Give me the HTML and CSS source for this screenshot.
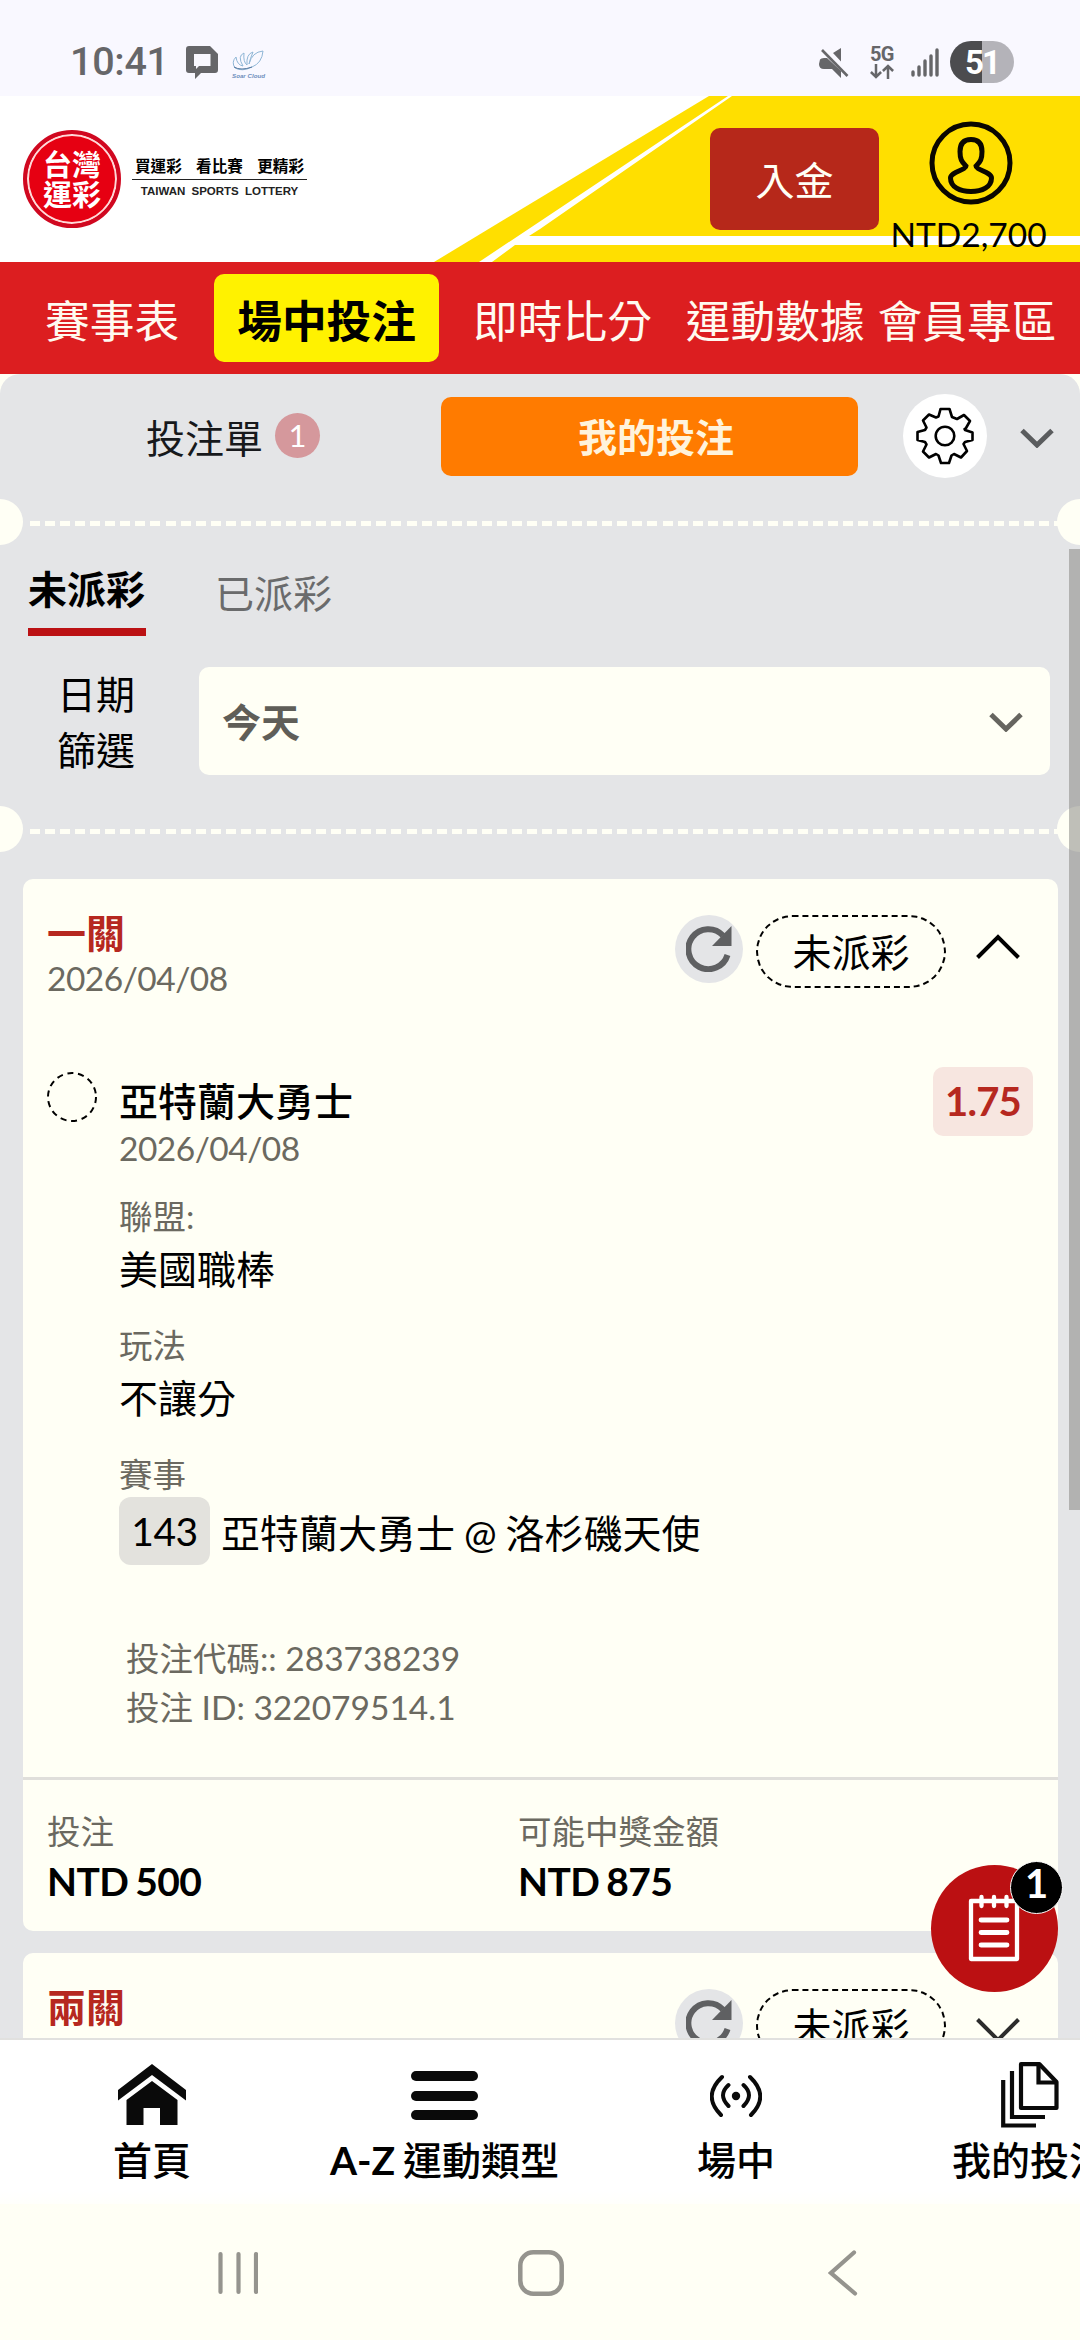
FILE: index.html
```html
<!DOCTYPE html>
<html lang="zh-TW">
<head>
<meta charset="utf-8">
<title>台灣運彩 - 我的投注</title>
<link rel="stylesheet" href="styles.css">
</head>
<body>
<div class="screen">
  <div class="statusbar">
    <div class="status-left">
      <span class="clock">10:41</span>
      <svg class="chat-icon" width="32" height="33" viewBox="0 0 32 33"><path fill="#666669" fill-rule="evenodd" d="M3 0H24L32 8V24Q32 27 29 27H15L9 33V27H3Q0 27 0 24V3Q0 0 3 0ZM8 8V20H10V23L13 20H24.500V8Z"/></svg>
      <span class="cloud-app">
        <svg width="32" height="22" viewBox="0 0 32 22" fill="none" stroke="#8fb6d6" stroke-width="1"><path d="M3 18Q-1 12 4 7Q5 15 11 16Q5 6 12 3Q11 12 15 15Q14 4 21 2Q18 9 17 14Q20 2 31 1Q30 13 20 17Q10 22 3 18Z"/><path stroke="#56789f" d="M2 17Q9 21 20 17"/></svg>
        <span class="cloud-name">Soar Cloud</span>
      </span>
    </div>
    <div class="status-right">
      <svg class="mute-icon" width="31" height="31" viewBox="0 0 31 31" fill="#666669"><path d="M14 5L22 0V13.500ZM1 11.500Q2 10 5 10H8L22 23V30L13 21H5Q0 21 0 16Z"/><path d="M3 2L28.500 28" stroke="#666669" stroke-width="2.600"/></svg>
      <div class="net">
        <span class="net-label">5G</span>
        <svg width="24" height="15" viewBox="0 0 24 15" fill="none" stroke="#666669" stroke-width="2.500"><path d="M6 0V13M0.900 8L6 13L11.100 8M18 15V2M12.900 7L18 2L23.100 7"/></svg>
      </div>
      <svg class="signal" width="28" height="29" viewBox="0 0 28 29" stroke="#666669" stroke-width="3.400" stroke-linecap="round"><path d="M2 24V27M8 19V27M14 13V27M20 8V27M26 2V27"/></svg>
      <div class="battery">51</div>
    </div>
  </div>

  <header class="masthead">
    <svg class="masthead-art" width="1080" height="166" viewBox="0 0 1080 166"><path fill="#ffdf00" d="M709 0H1080V166H434Z"/><path fill="#fff" d="M728 0H732L540 133L529 140H1080V149H515L492 166H479Z"/></svg>
    <div class="brand">
      <div class="seal"><span>台灣</span><span>運彩</span></div>
      <div class="slogan">
        <div class="slogan-zh"><span>買運彩</span><span>看比賽</span><span>更精彩</span></div>
        <div class="slogan-en">TAIWAN SPORTS LOTTERY</div>
      </div>
    </div>
    <div class="deposit">入金</div>
    <div class="account">
      <svg width="84" height="84" viewBox="0 0 84 84" fill="none" stroke="#0a0700" stroke-width="5"><circle cx="42" cy="42" r="39"/><path d="M42 18.500C34 18.500 31 23 31 30.500C31 38 32.500 41 37 45C37 49 21.500 51 21.500 57C21.500 66 31 70.500 42 70.500S62.500 66 62.500 57C62.500 51 47 49 47 45C51.500 41 53 38 53 30.500C53 23 50 18.500 42 18.500Z"/></svg>
      <span class="balance">NTD2,700</span>
    </div>
  </header>

  <nav class="mainnav">
    <span>賽事表</span>
    <span class="active">場中投注</span>
    <span class="live">即時比分</span>
    <span class="data">運動數據</span>
    <span class="member">會員專區</span>
  </nav>

  <main class="panel-wrap">
    <div class="panel">
      <div class="slip-tabs">
        <div class="slip-tab">投注單<span class="count">1</span></div>
        <div class="slip-tab current">我的投注</div>
        <div class="settings"><svg width="58" height="58" viewBox="0 0 58 58" fill="none" stroke="#000" stroke-width="2.600" stroke-linejoin="round"><path d="M24.500 2H33.500L36 10L41 12L48 8L54 14L50 21L48.500 22L49 23L56.500 25.500V33L49 35L47.500 37L51 44L45 50.500L38 47L35.500 48.500L33 56H25L22.500 48.500L20 47L13 50.500L7 44.500L10.500 37.500L9 35L1.500 33V25L9 23L10.500 20.500L7 13.500L13 7.500L20 10.500L22.500 9.500Z"/><circle cx="29" cy="29" r="9.300"/></svg></div>
        <svg class="fold" width="34" height="20" viewBox="0 0 34 20" fill="none" stroke="#5a5c5e" stroke-width="5"><path d="M2 2.500L17 17L32 2.500"/></svg>
      </div>
      <div class="perforation"></div>
      <section class="filters">
        <div class="state-tabs"><span class="state on">未派彩</span><span class="state">已派彩</span></div>
        <div class="date-row">
          <div class="date-label">日期<br>篩選</div>
          <div class="select">今天<svg width="34" height="20" viewBox="0 0 34 20" fill="none" stroke="#66655f" stroke-width="5"><path d="M2 2.500L17 17L32 2.500"/></svg></div>
        </div>
      </section>
      <div class="perforation second"></div>

      <section class="tickets">
        <article class="ticket">
          <div class="ticket-head">
            <div><div class="ticket-title">一關</div><div class="muted date">2026/04/08</div></div>
            <div class="actions">
              <span class="reload"><svg width="46" height="46" viewBox="0 0 46 46"><path fill="none" stroke="#5f6062" stroke-width="6" d="M41.500 29A20 20 0 1 1 37 9.500"/><path fill="#5f6062" d="M45.500 0V20H26Z"/></svg></span>
              <span class="pill">未派彩</span>
              <svg class="toggle" width="44" height="26" viewBox="0 0 44 26" fill="none" stroke="#000" stroke-width="4"><path d="M1.500 23.500L22 3L42.500 23.500"/></svg>
            </div>
          </div>
          <div class="pick">
            <svg class="ring" width="50" height="50" viewBox="0 0 50 50"><circle cx="25" cy="25" r="24" fill="none" stroke="#000" stroke-width="2" stroke-dasharray="6.100 4.670"/></svg>
            <div class="pick-body">
              <div class="pick-name">亞特蘭大勇士</div>
              <div class="muted pick-date">2026/04/08</div>
              <div class="field"><div class="muted label">聯盟:</div><div class="value">美國職棒</div></div>
              <div class="field"><div class="muted label">玩法</div><div class="value">不讓分</div></div>
              <div class="field"><div class="muted label">賽事</div><div class="match"><span class="match-no">143</span><span class="teams">亞特蘭大勇士 @ 洛杉磯天使</span></div></div>
              <div class="muted codes">投注代碼:: 283738239<br>投注 ID: 322079514.1</div>
            </div>
            <div class="odds">1.75</div>
          </div>
          <div class="ticket-foot">
            <div><div class="muted">投注</div><div class="money">NTD 500</div></div>
            <div><div class="muted">可能中獎金額</div><div class="money">NTD 875</div></div>
          </div>
        </article>
        <article class="ticket">
          <div class="ticket-head">
            <div class="ticket-title">兩關</div>
            <div class="actions">
              <span class="reload"><svg width="46" height="46" viewBox="0 0 46 46"><path fill="none" stroke="#5f6062" stroke-width="6" d="M41.500 29A20 20 0 1 1 37 9.500"/><path fill="#5f6062" d="M45.500 0V20H26Z"/></svg></span>
              <span class="pill">未派彩</span>
              <svg class="toggle down" width="44" height="26" viewBox="0 0 44 26" fill="none" stroke="#2c2c2c" stroke-width="4"><path d="M1.500 2.500L22 23L42.500 2.500"/></svg>
            </div>
          </div>
        </article>
      </section>
    </div>
    <div class="scrollbar"></div>
    <div class="fab">
      <svg width="54" height="70" viewBox="0 0 54 70" fill="none" stroke="#fff" stroke-width="4.300" stroke-linecap="round" stroke-linejoin="round"><path d="M4 8H50V66H4ZM14.500 4V13M27 4V13M39.500 4V13"/><path stroke-width="4.800" d="M14 27H40M14 39.500H40M14 52H40"/></svg>
      <span class="fab-count">1</span>
    </div>
  </main>

  <nav class="tabbar">
    <div class="tab home"><svg width="68" height="62" viewBox="0 0 68 62" fill="#0a0a0a"><path d="M34 0L68 26V36.500L34 11L0 36.500V26Z"/><path d="M34 17L59.500 36V61H42V44H25.500V61H8.500V36Z"/></svg><span>首頁</span></div>
    <div class="tab sports"><svg width="68" height="62" viewBox="0 0 68 62" fill="#0a0a0a"><rect y="7" width="67" height="10" rx="5"/><rect y="27" width="67" height="10" rx="5"/><rect y="46" width="67" height="10" rx="5"/></svg><span><b>A-Z</b> 運動類型</span></div>
    <div class="tab inplay"><svg width="52" height="62" viewBox="0 0 52 62" fill="none" stroke="#0a0a0a" stroke-width="4" stroke-linecap="round"><circle cx="26" cy="32" r="4.200" fill="#0a0a0a" stroke="none"/><path d="M12 13Q-8 32 11 51M40 13Q60 32 41 51M18.500 21Q7.500 31 18.500 42M33.500 21Q44.500 31 33.500 42"/></svg><span>場中</span></div>
    <div class="tab mybets"><svg width="58" height="66" viewBox="0 0 58 66" fill="none" stroke="#0a0a0a" stroke-width="4.200"><path stroke-linejoin="round" d="M20 2.200H38.500L55.500 20V46H20Z"/><path d="M37.500 2V20.500H55M11 9V55H44M2.200 18V63.500H35"/></svg><span>我的投注</span></div>
  </nav>

  <div class="sysbar">
    <svg width="40" height="46" viewBox="0 0 40 46" stroke="#95948e" stroke-width="4.200" stroke-linecap="round"><path d="M2.500 4V42M20.500 4V42M38 4V42"/></svg>
    <svg width="46" height="46" viewBox="0 0 46 46"><rect x="2.300" y="2.300" width="41.400" height="41.400" rx="13" fill="none" stroke="#95948e" stroke-width="4.500"/></svg>
    <svg width="30" height="46" viewBox="0 0 30 46" fill="none" stroke="#95948e" stroke-width="4.200" stroke-linecap="round"><path d="M26 2.500L3 23L27 43.500"/></svg>
  </div>
</div>
</body>
</html>
```
FILE: styles.css
```css
* { box-sizing: border-box; }
body {
  margin: 0;
  background: #fffff5;
  color: #000;
  font-family: Lato, "Noto Sans CJK TC", sans-serif;
  font-size: 39px;
}
svg { display: block; flex: none; }
.screen { width: 1080px; height: 2340px; overflow: hidden; display: flex; flex-direction: column; }
.screen > * { flex: none; }

.statusbar { height: 96px; background: #f9f8ff; color: #666669; display: flex; justify-content: space-between; padding: 0 66px 0 70px; }
.status-left, .status-right { display: flex; }
.clock { font: 500 39.5px/48px Roboto, sans-serif; width: 116px; padding-top: 38px; letter-spacing: -.3px; }
.chat-icon { margin-top: 46px; }
.cloud-app { margin: 50px 0 0 14px; }
.cloud-name { display: block; font: italic 700 6.2px/8px "Liberation Sans", sans-serif; color: #6f8fbd; white-space: nowrap; }
.mute-icon { margin-top: 48px; }
.net { width: 26px; margin: 45px 0 0 20px; }
.net-label { display: block; font: 700 20px/18px Roboto, sans-serif; height: 19px; letter-spacing: -.6px; }
.signal { margin: 48px 0 0 15px; }
.battery { width: 64px; height: 42px; margin: 41px 0 0 11px; border-radius: 21px; background: linear-gradient(90deg, #4c4c4f 50%, #b4b3b9 50%); color: #fff; font: 700 33px/43px Roboto, sans-serif; text-align: center; letter-spacing: -2px; }

.masthead { height: 166px; background: #fff; position: relative; display: flex; }
.masthead-art { position: absolute; inset: 0; }
.masthead > div { position: relative; }
.brand { width: 710px; display: flex; padding: 34px 0 0 23px; }
.seal { width: 98px; height: 98px; border-radius: 50%; background: #e60012; border: 4px solid #d00820; box-shadow: inset 0 0 0 2px #ffd9d9; color: #fff; font: 700 29px/30px "Noto Sans CJK TC", sans-serif; text-align: center; padding-top: 14px; }
.seal span { display: block; }
.slogan { width: 175px; margin: 24px 0 0 11px; }
.slogan-zh { display: flex; justify-content: space-between; padding: 0 3px; height: 26px; border-bottom: 1px solid #222; font: 700 15.6px/23px "Noto Sans CJK TC", sans-serif; }
.slogan-en { font: 700 11.5px/22px "Liberation Sans", sans-serif; color: #222; text-align: center; word-spacing: 3px; white-space: nowrap; }
.deposit { width: 169px; height: 102px; margin-top: 32px; border-radius: 10px; background: #b6281a; color: #fffff5; text-align: center; line-height: 104px; }
.account { width: 183px; display: flex; flex-direction: column; align-items: center; padding-top: 25px; }
.balance { font-size: 33.5px; line-height: 40px; margin-top: 9px; padding-right: 4px; }

.mainnav { height: 112px; background: #dc1e20; color: #fffaf0; display: flex; align-items: center; padding-left: 45px; font-size: 44.7px; line-height: 88px; white-space: nowrap; }
.mainnav span { height: 88px; padding-top: 3px; }
.mainnav .active { width: 225px; margin: 0 34px 0 35px; border-radius: 10px; background: #fff200; color: #000; font-weight: 700; text-align: center; }
.mainnav .data { margin-left: 34px; }
.mainnav .member { margin-left: 13px; }

.panel-wrap { height: 1666px; position: relative; overflow: hidden; border-bottom: 2px solid #e1e1df; }
.panel { height: 1700px; background: #e4e5e7; border-radius: 20px 20px 0 0; }
.slip-tabs { height: 147px; padding-top: 18px; display: flex; }
.slip-tab { width: 441px; padding-left: 146px; display: flex; height: 88px; align-items: center; color: #17191c; }
.count { width: 45px; height: 45px; margin: 0 0 1px 12px; border-radius: 50%; background: #d5989c; color: #fff; font-size: 31px; line-height: 45px; text-align: center; }
.slip-tab.current { width: 417px; height: 79px; margin-top: 5px; padding: 0 0 0 13px; justify-content: center; border-radius: 10px; background: #ff7b00; color: #fff3dc; font-weight: 700; line-height: 82px; }
.settings { width: 84px; height: 84px; margin: 2px 0 0 45px; border-radius: 50%; background: #fff; display: grid; place-items: center; }
.fold { margin: 36px 0 0 33px; }
.perforation { height: 5px; margin: 0 22px 0 30px; position: relative; background: repeating-linear-gradient(90deg, #fffff5 0 10px, transparent 10px 15.06px); }
.perforation::before, .perforation::after { content: ""; position: absolute; top: -22px; width: 46px; height: 46px; border-radius: 50%; background: #fffff5; }
.perforation::before { left: -53px; }
.perforation::after { right: -45px; }
.perforation.second::before, .perforation.second::after { top: -23px; }

.filters { height: 303px; padding: 34px 30px 0 28px; }
.state-tabs { display: flex; gap: 69px; }
.state { line-height: 62px; height: 76px; padding-top: 2px; color: #6a6b6c; }
.state.on { border-bottom: 8px solid #bb1114; color: #000; font-weight: 700; width: 118px; padding-top: 0; line-height: 58px; }
.date-row { display: flex; margin-top: 31px; }
.date-label { width: 171px; padding-left: 29px; margin-top: -1px; line-height: 56px; white-space: nowrap; }
.select { width: 851px; height: 108px; border-radius: 10px; background: #fffff5; color: #5f5e58; font-weight: 700; display: flex; justify-content: space-between; align-items: center; padding: 2px 27px 0 23px; line-height: 108px; }

.tickets { padding: 45px 22px 0 23px; display: flex; flex-direction: column; gap: 22px; }
.ticket { border-radius: 10px; background: #fffff5; }
.ticket-head { height: 193px; padding: 32px 38px 0 24px; display: flex; justify-content: space-between; }
.ticket-title { color: #b6281f; font-weight: 700; line-height: 44px; }
.muted { color: #6b6960; font-size: 33.5px; }
.date { line-height: 47px; letter-spacing: -.5px; }
.actions { display: flex; padding-top: 4px; }
.reload { width: 68px; height: 68px; border-radius: 50%; background: #e4e5e7; display: grid; place-items: center; }
.pill { width: 190px; height: 73px; margin: 0 30px 0 13px; border: 2px dashed #000; border-radius: 37px; text-align: center; line-height: 70px; }
.toggle { margin-top: 19px; }
.toggle.down { margin-top: 28px; }
.pick { height: 705px; padding: 0 25px 0 24px; display: flex; }
.ring { margin-right: 22px; }
.pick-body { width: 815px; padding-top: 4px; }
.pick-name { font-weight: 500; line-height: 50px; }
.pick-date { line-height: 45px; margin-bottom: 23px; letter-spacing: -.5px; }
.field { margin-bottom: 23px; }
.label { line-height: 44px; }
.value { line-height: 62px; }
.match { display: flex; align-items: center; gap: 11px; line-height: 68px; margin-top: 1px; }
.match-no { width: 91px; border-radius: 12px; background: #e3e2dd; text-align: center; letter-spacing: -.4px; }
.teams { padding-top: 2px; margin-bottom: -2px; word-spacing: -1px; }
.codes { margin-top: 69px; padding-left: 7px; line-height: 49px; }
.odds { width: 100px; height: 69px; margin-top: -5px; border-radius: 10px; background: #f7e6e0; color: #b6281f; font-size: 40px; font-weight: 700; line-height: 68px; text-align: center; letter-spacing: -.8px; }
.ticket-foot { height: 154px; border-top: 3px solid #e0dfdb; padding: 26px 24px 0; display: flex; line-height: 50px; }
.ticket-foot > div { width: 471px; }
.money { font-weight: 700; letter-spacing: -.6px; word-spacing: -2px; }

.scrollbar { position: absolute; right: 0; top: 175px; width: 11px; height: 961px; background: rgba(128, 128, 124, .5); }
.fab { position: absolute; left: 931px; top: 1491px; width: 127px; height: 127px; border-radius: 50%; background: #bb1012; padding: 28px 0 0 36px; }
.fab-count { position: absolute; left: 79px; top: -4px; width: 53px; height: 53px; border-radius: 50%; border: 1.5px solid #fff; background: #000; color: #fff; font-size: 40px; font-weight: 700; line-height: 42px; text-align: center; }

.tabbar { height: 164px; background: linear-gradient(#fff 92%, #fffffb); display: flex; padding-left: 43px; overflow: hidden; }
.tab { flex: none; display: flex; flex-direction: column; align-items: center; padding-top: 24px; font-weight: 500; white-space: nowrap; }
.tab svg { height: 62px; }
.tab span { line-height: 50px; margin-top: 9px; word-spacing: -2px; }
.home { width: 218px; }
.sports { width: 367px; }
.inplay { width: 216px; }
.mybets { width: 372px; padding-top: 22px; }
.mybets svg { height: 66px; }
.mybets span { margin-top: 7px; }

.sysbar { height: 136px; display: flex; justify-content: space-between; padding: 46px 222px 0 218px; }
.sysbar svg:nth-child(2) { margin-right: 4px; }
```
